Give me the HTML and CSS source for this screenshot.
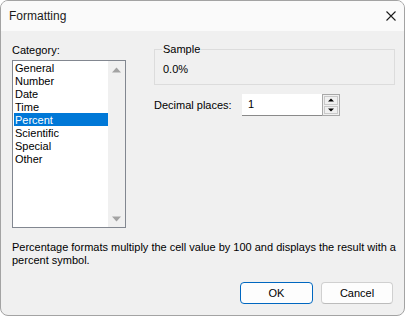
FILE: index.html
```html
<!DOCTYPE html>
<html>
<head>
<meta charset="utf-8">
<link rel="stylesheet" href="styles.css">
</head>
<body>
<div class="window">
  <div class="titlebar">
    <span class="title">Formatting</span>
    <span class="close"><svg width="10" height="10" viewBox="0 0 10 10"><path d="M0.5 0.5 L9.5 9.5 M9.5 0.5 L0.5 9.5" stroke="#1b1b1b" stroke-width="1.1" fill="none"/></svg></span>
  </div>
  <div class="content">
    <div class="top">
      <div class="category">
        <div class="label">Category:</div>
        <div class="listbox">
          <ul class="items">
            <li>General</li>
            <li>Number</li>
            <li>Date</li>
            <li>Time</li>
            <li class="selected">Percent</li>
            <li>Scientific</li>
            <li>Special</li>
            <li>Other</li>
          </ul>
          <div class="scrollbar">
            <div class="arrow"><svg width="9" height="6" viewBox="0 0 9 6"><polygon points="0,5.5 4.5,0.5 9,5.5" fill="#a3a3a3"/></svg></div>
            <div class="arrow"><svg width="9" height="6" viewBox="0 0 9 6"><polygon points="0,0.5 4.5,5.5 9,0.5" fill="#a3a3a3"/></svg></div>
          </div>
        </div>
      </div>
      <div class="options">
        <fieldset class="sample">
          <legend>Sample</legend>
          <div class="sample-value">0.0%</div>
        </fieldset>
        <div class="decimal-row">
          <span class="decimal-label">Decimal places:</span>
          <div class="spin">
            <div class="spin-input">1</div>
            <div class="spin-buttons">
              <div class="spin-btn"><svg width="6" height="4" viewBox="0 0 6 4"><polygon points="0,3.5 3,0.5 6,3.5" fill="#000"/></svg></div>
              <div class="spin-btn"><svg width="6" height="4" viewBox="0 0 6 4"><polygon points="0,0.5 3,3.5 6,0.5" fill="#000"/></svg></div>
            </div>
          </div>
        </div>
      </div>
    </div>
    <p class="description">Percentage formats multiply the cell value by 100 and displays the result with a percent symbol.</p>
    <div class="buttons">
      <button class="btn default">OK</button>
      <button class="btn">Cancel</button>
    </div>
  </div>
</div>
</body>
</html>
```
FILE: styles.css
```css
html, body {
  margin: 0;
  padding: 0;
  background: #ffffff;
}

.window {
  width: 405px;
  height: 316px;
  box-sizing: border-box;
  border: 1px solid #a3a3a3;
  border-radius: 8px;
  overflow: hidden;
  background: #f0f0f0;
  display: flex;
  flex-direction: column;
  font-family: "Liberation Sans", Arial, sans-serif;
  font-size: 11px;
  color: #000;
}

.titlebar {
  height: 30px;
  flex: none;
  background: #fafafa;
  display: flex;
  align-items: center;
  padding-left: 8px;
}

.title {
  font-size: 12px;
  color: #1a1a1a;
}

.close {
  margin-left: auto;
  margin-right: 8px;
  width: 10px;
  height: 10px;
  display: flex;
}

.content {
  flex: 1;
  display: flex;
  flex-direction: column;
  padding: 12px 11px 11px 11px;
}

.top {
  display: flex;
  align-items: flex-start;
}

.category {
  width: 114px;
  flex: none;
}

.label {
  line-height: 15px;
  margin-bottom: 2px;
}

.listbox {
  height: 168px;
  box-sizing: border-box;
  border: 1px solid #828790;
  display: flex;
  background: #fff;
}

.items {
  flex: 1;
  margin: 0;
  padding: 0 0 0 1px;
  list-style: none;
}

.items li {
  height: 13px;
  line-height: 14px;
  padding-left: 1px;
  white-space: nowrap;
}

.items li.selected {
  background: #0078d7;
  color: #fff;
}

.scrollbar {
  width: 17px;
  flex: none;
  background: #f0f0f0;
  display: flex;
  flex-direction: column;
  justify-content: space-between;
}

.arrow {
  height: 17px;
  display: flex;
  align-items: center;
  justify-content: center;
}

.options {
  flex: 1;
  margin-left: 28px;
  margin-right: -2px;
}

.sample {
  margin: 0;
  padding: 0 8px 8px 8px;
  border: 1px solid #dcdcdc;
  min-width: 0;
}

.sample legend {
  padding: 0 1px;
  margin-left: -1px;
  line-height: 12px;
}

.sample-value {
  margin-top: 8px;
  line-height: 13px;
}

.decimal-row {
  display: flex;
  align-items: center;
  margin-top: 9px;
}

.decimal-label {
  width: 88px;
  flex: none;
}

.spin {
  display: flex;
}

.spin-input {
  width: 80px;
  height: 22px;
  box-sizing: border-box;
  background: #fff;
  border-bottom: 1px solid #8a8a8a;
  padding-left: 6px;
  line-height: 21px;
}

.spin-buttons {
  width: 18px;
  height: 22px;
  box-sizing: border-box;
  border: 1px solid #a8a8a8;
  display: flex;
  flex-direction: column;
  padding: 1px;
  gap: 1px;
  background: #f0f0f0;
}

.spin-btn {
  flex: 1;
  box-sizing: border-box;
  border: 1px solid #c9c9c9;
  background: #f0f0f0;
  display: flex;
  align-items: center;
  justify-content: center;
}

.description {
  margin: 13px -10px 0 0;
  line-height: 13px;
}

.buttons {
  margin-top: auto;
  display: flex;
  justify-content: flex-end;
  gap: 8px;
}

.btn {
  width: 72px;
  height: 22px;
  box-sizing: border-box;
  border: 1px solid #d0d0d0;
  border-bottom-color: #bcbcbc;
  border-radius: 4px;
  background: #fdfdfd;
  font-family: "Liberation Sans", Arial, sans-serif;
  font-size: 11px;
  color: #000;
  padding: 0;
}

.btn.default {
  width: 73px;
  border: 1px solid #0067c0;
}
```
